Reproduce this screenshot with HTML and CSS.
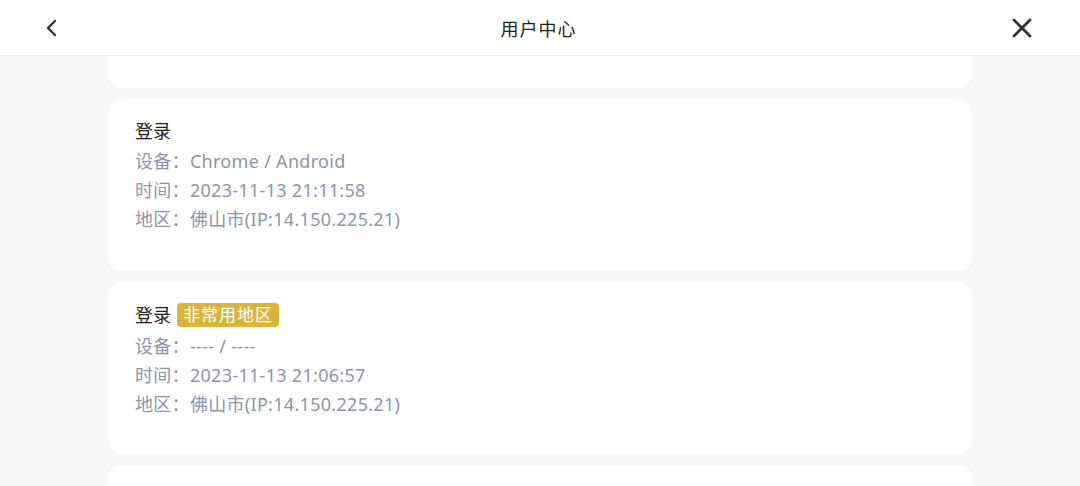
FILE: index.html
```html
<!DOCTYPE html>
<html lang="zh-CN">
<head>
    <meta charset="UTF-8">
    <meta name="viewport" content="width=device-width, initial-scale=1.0">
    <title>用户中心</title>
    <link rel="stylesheet" href="styles.css">
</head>
<body>

    <div class="header">
        <button class="nav-btn back" aria-label="返回">
            <svg width="20" height="20" viewBox="0 0 20 20"><path d="M13 3 L6 10 L13 17" fill="none" stroke="#333" stroke-width="2.4" stroke-linecap="round" stroke-linejoin="round"/></svg>
        </button>
        <h1>用户中心</h1>
        <button class="nav-btn close" aria-label="关闭">
            <svg width="20" height="20" viewBox="0 0 20 20"><path d="M2 2 L18 18 M18 2 L2 18" fill="none" stroke="#333" stroke-width="2.8" stroke-linecap="round"/></svg>
        </button>
    </div>

    <div class="list">
        <div class="card card-cut"></div>

        <div class="card">
            <div class="title">登录</div>
            <div class="row">设备：Chrome / Android</div>
            <div class="row">时间：2023-11-13 21:11:58</div>
            <div class="row">地区：佛山市(IP:14.150.225.21)</div>
        </div>

        <div class="card">
            <div class="title tall">登录 <span class="badge">非常用地区</span></div>
            <div class="row">设备：---- / ----</div>
            <div class="row">时间：2023-11-13 21:06:57</div>
            <div class="row">地区：佛山市(IP:14.150.225.21)</div>
        </div>

        <div class="card"></div>
    </div>

</body>
</html>
```

FILE: styles.css
```css
body {
    margin: 0;
    height: 486px;
    overflow: hidden;
    background-color: #f6f7f9;
    font-family: "Noto Sans", "Noto Sans CJK SC", sans-serif;
}

.header {
    height: 55px;
    background-color: #fff;
    border-bottom: 1px solid #eef0f3;
    display: grid;
    grid-template-columns: 1fr auto 1fr;
    align-items: center;
    padding: 0 46px 0 40px;
}

.header h1 {
    margin: 0;
    margin-left: 3px;
    font-size: 18px;
    font-weight: normal;
    color: #222;
    letter-spacing: 1px;
}

.nav-btn {
    background: none;
    border: none;
    padding: 0;
    width: 24px;
    height: 24px;
    display: flex;
    align-items: center;
    justify-content: center;
}

.close {
    justify-self: end;
}

.list {
    width: 864px;
    margin: 0 auto;
    display: flex;
    flex-direction: column;
    gap: 11px;
}

.card {
    background-color: #fff;
    border-radius: 14px;
    padding: 19px 27px 38px;
    height: 115px;
}

.card-cut {
    height: 32px;
    padding: 0;
    border-radius: 0 0 14px 14px;
}

.title {
    font-size: 18px;
    color: #1f1f1f;
    line-height: 26px;
    display: flex;
    align-items: center;
    gap: 6px;
    margin-bottom: 3px;
}

.title.tall {
    margin-top: 1px;
    margin-bottom: 4px;
}

.badge {
    background-color: #d8b43b;
    color: #fff;
    font-size: 17px;
    line-height: 24px;
    padding: 0 6px;
    border-radius: 4px;
    letter-spacing: 1px;
}

.row {
    font-size: 18px;
    line-height: 29px;
    color: #8c95a6;
    letter-spacing: 0.3px;
}
```
